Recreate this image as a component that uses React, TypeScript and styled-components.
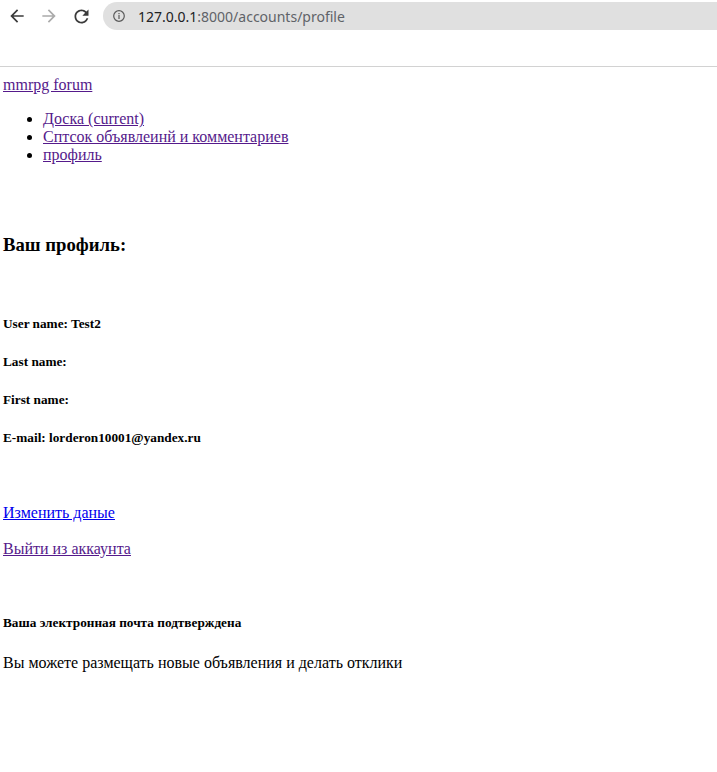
import React from "react";
import styled, { createGlobalStyle } from "styled-components";

const GlobalStyle = createGlobalStyle`
  html, body {
    margin: 0;
    padding: 0;
    background: #ffffff;
  }
  body {
    font-family: "Liberation Serif", "Times New Roman", serif;
    font-size: 16px;
    color: #000000;
  }
`;

const Chrome = styled.header`
  height: 66px;
  border-bottom: 1px solid #d2d2d2;
  background: #ffffff;
`;

const Toolbar = styled.div`
  display: flex;
  align-items: center;
  height: 32px;
  padding-left: 1px;
`;

const NavButton = styled.span<{ $disabled?: boolean }>`
  display: flex;
  align-items: center;
  justify-content: center;
  width: 32px;
  height: 32px;
  color: ${(p) => (p.$disabled ? "#ababab" : "#3b3b3b")};
`;

const Omnibox = styled.div`
  flex: 1;
  display: flex;
  align-items: center;
  height: 28px;
  margin-left: 6px;
  padding-left: 10px;
  border-radius: 14px 0 0 14px;
  background: #e0e0e0;
  font-family: "Noto Sans", "Open Sans", sans-serif;
  font-size: 14px;
  color: #5f6368;
`;

const InfoIcon = styled.span`
  display: flex;
  width: 12px;
  height: 12px;
  margin-right: 13px;
  color: #5a5a5a;
`;

const Host = styled.span`
  color: #202124;
`;

const Page = styled.main`
  display: flex;
  flex-direction: column;
  align-items: flex-start;
  padding: 0 0 40px 3px;
`;

const Link = styled.a<{ $visited?: boolean }>`
  color: ${(p) => (p.$visited ? "#551a8b" : "#0000ee")};
  text-decoration: underline;
  cursor: pointer;
`;

const Brand = styled(Link)`
  margin-top: 9px;
  font-size: 16px;
`;

const NavList = styled.ul`
  margin: 16px 0 0;
  padding-left: 40px;
  list-style: disc;
`;

const NavItem = styled.li`
  font-size: 16px;
`;

const Heading = styled.h3`
  margin: 70px 0 0;
  font-size: 18.72px;
  font-weight: bold;
`;

const Field = styled.h5<{ $gap: number }>`
  margin: ${(p) => p.$gap}px 0 0;
  font-size: 13.28px;
  font-weight: bold;
`;

const ActionLink = styled(Link)<{ $gap: number }>`
  margin-top: ${(p) => p.$gap}px;
  font-size: 16px;
`;

const Note = styled.p`
  margin: 23px 0 0;
  font-size: 16px;
`;

const BackIcon = () => (
  <svg width="20" height="20" viewBox="0 0 24 24" fill="currentColor">
    <path d="M20 11H7.83l5.59-5.59L12 4l-8 8 8 8 1.41-1.41L7.83 13H20v-2z" />
  </svg>
);

const ForwardIcon = () => (
  <svg width="20" height="20" viewBox="0 0 24 24" fill="currentColor">
    <path d="M12 4l-1.41 1.41L16.17 11H4v2h12.17l-5.58 5.59L12 20l8-8z" />
  </svg>
);

const ReloadIcon = () => (
  <svg width="21" height="21" viewBox="0 0 24 24" fill="currentColor">
    <path d="M17.65 6.35C16.2 4.9 14.21 4 12 4c-4.42 0-7.99 3.58-7.99 8s3.57 8 7.99 8c3.73 0 6.84-2.55 7.730-6h-2.08c-.82 2.330-3.04 4-5.65 4-3.31 0-6-2.69-6-6s2.69-6 6-6c1.66 0 3.14.69 4.22 1.78L13 11h7V4l-2.35 2.35z" />
  </svg>
);

const Info = () => (
  <svg width="12" height="12" viewBox="0 0 12 12" fill="none">
    <circle cx="6" cy="6" r="5.3" stroke="currentColor" strokeWidth="1.2" />
    <rect x="5.4" y="5" width="1.2" height="4" fill="currentColor" />
    <rect x="5.4" y="3" width="1.2" height="1.2" fill="currentColor" />
  </svg>
);

export default function App() {
  return (
    <>
      <GlobalStyle />
      <Chrome>
        <Toolbar>
          <NavButton>
            <BackIcon />
          </NavButton>
          <NavButton $disabled>
            <ForwardIcon />
          </NavButton>
          <NavButton>
            <ReloadIcon />
          </NavButton>
          <Omnibox>
            <InfoIcon>
              <Info />
            </InfoIcon>
            <Host>127.0.0.1</Host>:8000/accounts/profile
          </Omnibox>
        </Toolbar>
      </Chrome>
      <Page>
        <Brand $visited>mmrpg forum</Brand>
        <NavList>
          <NavItem>
            <Link $visited>Доска (current)</Link>
          </NavItem>
          <NavItem>
            <Link $visited>Сптсок объявлеинй и комментариев</Link>
          </NavItem>
          <NavItem>
            <Link $visited>профиль</Link>
          </NavItem>
        </NavList>
        <Heading>Ваш профиль:</Heading>
        <Field $gap={60}>User name: Test2</Field>
        <Field $gap={22}>Last name:</Field>
        <Field $gap={22}>First name:</Field>
        <Field $gap={22}>E-mail: lorderon10001@yandex.ru</Field>
        <ActionLink $gap={58}>Изменить даные</ActionLink>
        <ActionLink $gap={18} $visited>
          Выйти из аккаунта
        </ActionLink>
        <Field $gap={57}>Ваша электронная почта подтверждена</Field>
        <Note>Вы можете размещать новые объявления и делать отклики</Note>
      </Page>
    </>
  );
}
